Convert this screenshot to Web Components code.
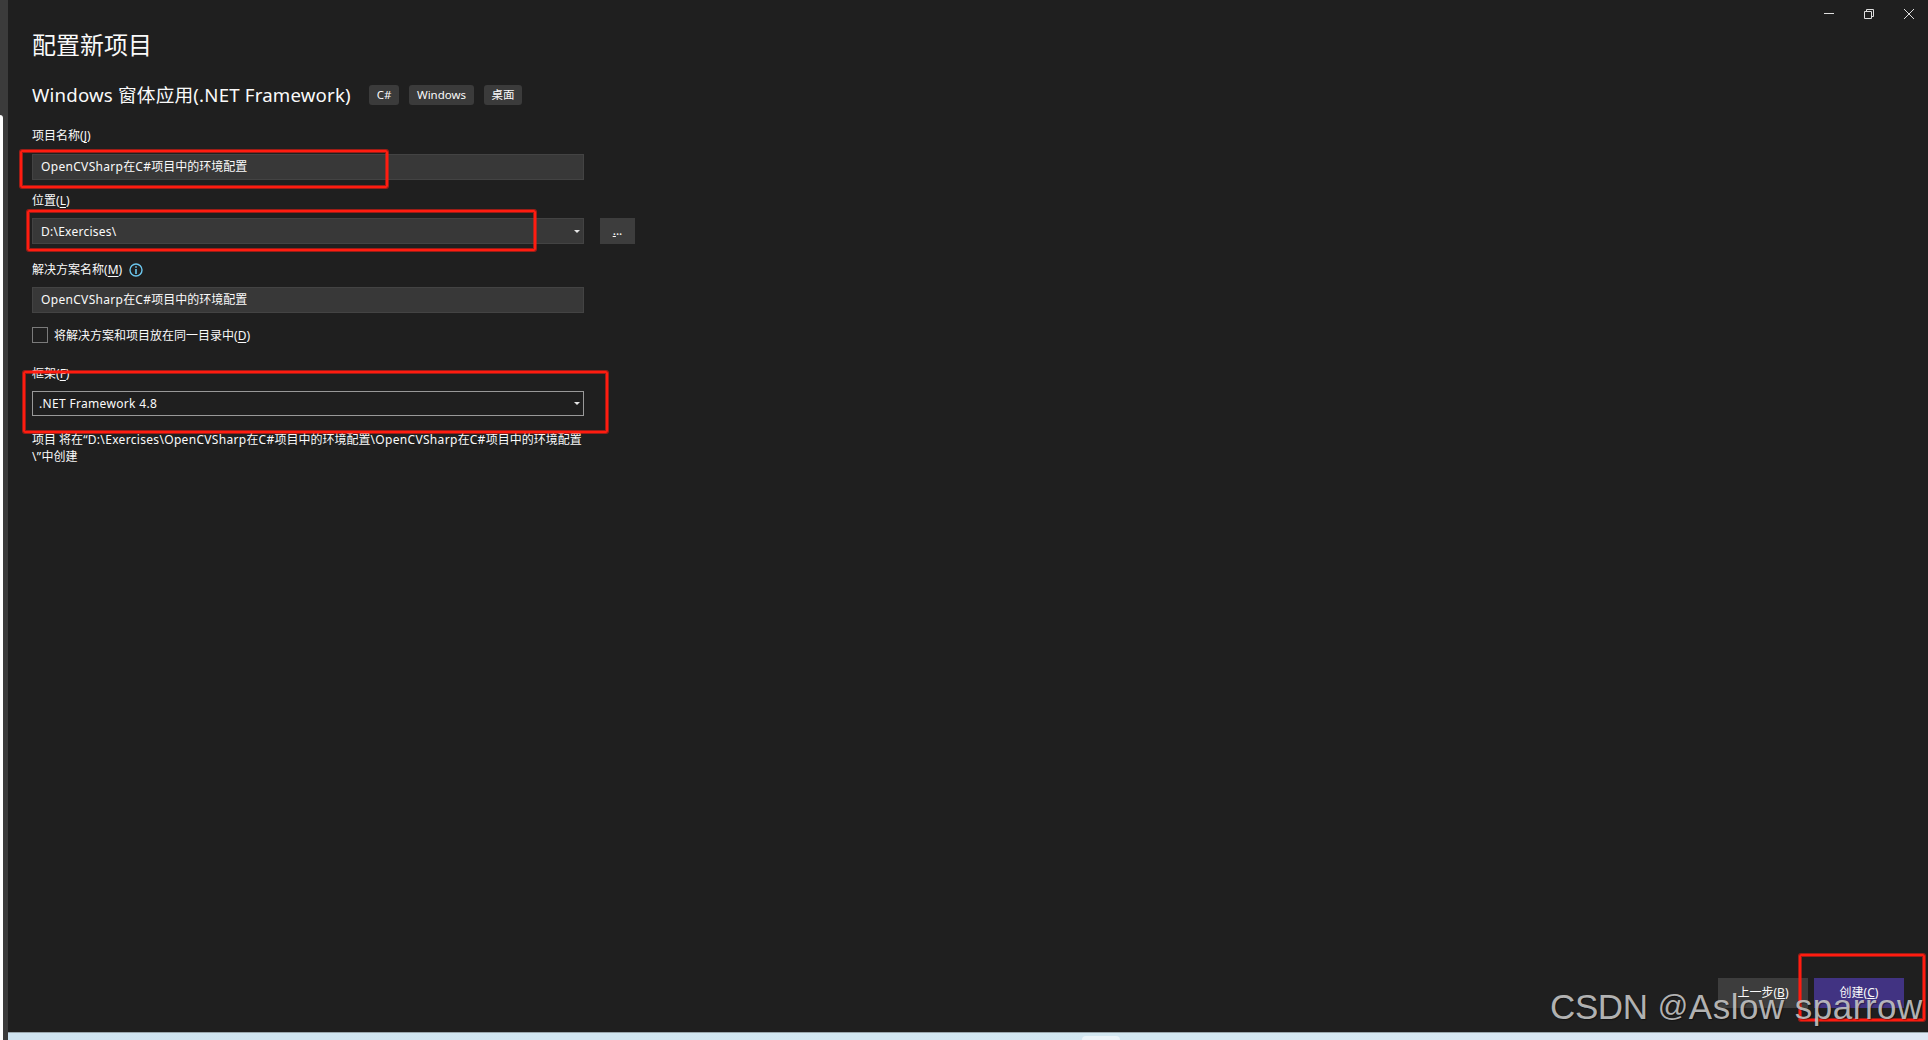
<!DOCTYPE html>
<html lang="zh-CN">
<head>
<meta charset="UTF-8">
<title>配置新项目</title>
<style>
    body {
        margin: 0;
        height: 1040px;
        overflow: hidden;
        background: #1f1f1f;
        color: #fafafa;
        font: 12px/16px "Noto Sans", "Noto Sans CJK SC", sans-serif;
    }
</style>
</head>
<body>
<project-window></project-window>

<script>
class WindowControls extends HTMLElement {
    constructor() {
        super();
        this.attachShadow({ mode: 'open' });
    }

    connectedCallback() {
        this.shadowRoot.innerHTML = `
            <style>
                :host {
                    display: flex;
                    justify-content: flex-end;
                    height: 28px;
                }

                svg {
                    width: 40px;
                    height: 28px;
                    fill: none;
                    stroke: #dedede;
                }
            </style>
            <svg viewBox="0 0 40 28"><path d="M16 13.5h10"/></svg>
            <svg viewBox="0 0 40 28"><path d="M16.5 11.5h7v7h-7zM18.5 11v-1.500h7v7h-2"/></svg>
            <svg viewBox="0 0 40 28"><path d="M16 9l10 10M26 9l-10 10"/></svg>
        `;
    }
}

class TagChip extends HTMLElement {
    constructor() {
        super();
        this.attachShadow({ mode: 'open' });
    }

    connectedCallback() {
        this.shadowRoot.innerHTML = `
            <style>
                :host {
                    display: block;
                    box-sizing: border-box;
                    height: 20px;
                    line-height: 19px;
                    font-size: 11.5px;
                    text-align: center;
                    border-radius: 3px;
                    background: #3b3b3b;
                }
            </style>
            <slot></slot>
        `;
    }
}

class FieldLabel extends HTMLElement {
    constructor() {
        super();
        this.attachShadow({ mode: 'open' });
    }

    connectedCallback() {
        const key = this.getAttribute('key');

        this.shadowRoot.innerHTML = `
            <style>
                :host {
                    display: flex;
                    align-items: center;
                    height: 16px;
                    white-space: nowrap;
                }

                u {
                    text-underline-offset: 2px;
                    text-decoration-thickness: 1px;
                    text-decoration-skip-ink: none;
                }
            </style>
            <span><slot></slot>(<u>${key}</u>)</span>
            <slot name="icon"></slot>
        `;
    }
}

class TextField extends HTMLElement {
    constructor() {
        super();
        this.attachShadow({ mode: 'open' });
    }

    connectedCallback() {
        const arrow = this.hasAttribute('dropdown')
            ? '<svg viewBox="0 0 6 3"><path d="M0 0h6L3 3z"/></svg>'
            : '';

        this.shadowRoot.innerHTML = `
            <style>
                :host {
                    display: flex;
                    align-items: center;
                    justify-content: space-between;
                    box-sizing: border-box;
                    width: 552px;
                    height: 26px;
                    padding: 0 3px 0 8px;
                    border: 1px solid #434343;
                    background: #383838;
                    white-space: nowrap;
                }

                :host([outlined]) {
                    height: 25px;
                    padding-left: 6px;
                    border-color: #999;
                    background: #1f1f1f;
                }

                svg {
                    width: 6px;
                    height: 3px;
                    fill: #e6e6e6;
                }
            </style>
            <span><slot></slot></span>
            ${arrow}
        `;
    }
}

class PushButton extends HTMLElement {
    constructor() {
        super();
        this.attachShadow({ mode: 'open' });
    }

    connectedCallback() {
        this.shadowRoot.innerHTML = `
            <style>
                :host {
                    display: flex;
                    align-items: center;
                    justify-content: center;
                    width: 90px;
                    height: 30px;
                    background: #3d3d3d;
                }

                :host([primary]) {
                    background: #413382;
                }

                :host([small]) {
                    width: 35px;
                    height: 26px;
                }
            </style>
            <span><slot></slot></span>
        `;
    }
}

class MarkBox extends HTMLElement {
    constructor() {
        super();
        this.attachShadow({ mode: 'open' });
    }

    connectedCallback() {
        const [x, y, width, height] = this.getAttribute('rect').split(' ');

        this.shadowRoot.innerHTML = `
            <style>
                :host {
                    position: absolute;
                    left: ${x}px;
                    top: ${y}px;
                    width: ${width}px;
                    height: ${height}px;
                    box-sizing: border-box;
                    border: 2px solid #ff1c10;
                    border-radius: 2px;
                    box-shadow: 0 0 0 1px rgba(255, 28, 16, .55), inset 0 0 0 1px rgba(255, 28, 16, .55);
                }
            </style>
        `;
    }
}

class ProjectForm extends HTMLElement {
    constructor() {
        super();
        this.attachShadow({ mode: 'open' });
    }

    connectedCallback() {
        this.shadowRoot.innerHTML = `
            <style>
                :host {
                    display: block;
                    padding-left: 24px;
                }

                h1, h2, p {
                    margin: 0;
                    font-weight: 400;
                }

                h1 {
                    font-size: 24px;
                    line-height: 34px;
                }

                .template {
                    display: flex;
                    align-items: center;
                    gap: 10px;
                    height: 24px;
                    margin: 21px 0 21px;
                }

                h2 {
                    width: 316px;
                    font-size: 18.67px;
                    letter-spacing: .18px;
                    line-height: 24px;
                    white-space: nowrap;
                }

                .latin {
                    letter-spacing: .32px;
                }

                text-field {
                    margin: 10px 0 13px;
                }

                .location {
                    display: flex;
                    gap: 16px;
                    margin: 9px 0 18px;
                }

                .location text-field {
                    margin: 0;
                    line-height: 18px;
                }

                .location .latin {
                    display: block;
                    padding-top: 1px;
                    letter-spacing: .25px;
                }

                .solution {
                    margin: 9px 0 14px;
                }

                .info {
                    width: 14px;
                    height: 14px;
                    margin-left: 7px;
                }

                .check {
                    display: flex;
                    align-items: center;
                    gap: 6px;
                    margin-bottom: 23px;
                }

                .check field-label {
                    height: 14px;
                    padding-top: 2px;
                }

                .box {
                    box-sizing: border-box;
                    width: 16px;
                    height: 16px;
                    border: 1px solid #7a7a7a;
                }

                .framework {
                    margin: 9px 0 15px;
                }

                p {
                    line-height: 17px;
                    white-space: nowrap;
                }
            </style>
            <h1>配置新项目</h1>
            <div class="template">
                <h2>Windows 窗体应用(.NET Framework)</h2>
                <tag-chip style="width: 30px; margin-left: 11px">C#</tag-chip>
                <tag-chip style="width: 65px">Windows</tag-chip>
                <tag-chip style="width: 38px">桌面</tag-chip>
            </div>
            <field-label key="J">项目名称</field-label>
            <text-field><span class="latin">OpenCVSharp</span>在<span class="latin">C#</span>项目中的环境配置</text-field>
            <field-label key="L">位置</field-label>
            <div class="location">
                <text-field dropdown><span class="latin">D:\\Exercises\\</span></text-field>
                <push-button small><u>.</u>..</push-button>
            </div>
            <field-label key="M">解决方案名称<svg slot="icon" class="info" viewBox="0 0 14 14">
                    <circle cx="7" cy="7" r="6" fill="none" stroke="#6cc7ee" stroke-width="1.400"/>
                    <path d="M6.200 3.200h1.600v1.600H6.200zM6.200 6h1.600v5H6.200z" fill="#6cc7ee"/>
                </svg></field-label>
            <text-field class="solution"><span class="latin">OpenCVSharp</span>在<span class="latin">C#</span>项目中的环境配置</text-field>
            <div class="check">
                <div class="box"></div>
                <field-label key="D">将解决方案和项目放在同一目录中</field-label>
            </div>
            <field-label key="F">框架</field-label>
            <text-field class="framework" outlined dropdown><span class="latin">.NET Framework 4.8</span></text-field>
            <p>项目 将在<span class="latin">“D:\\Exercises\\OpenCVSharp</span>在<span class="latin">C#</span>项目中的环境配置<span class="latin">\\OpenCVSharp</span>在<span class="latin">C#</span>项目中的环境配置<br><span class="latin">\\”</span>中创建</p>
        `;
    }
}

class ProjectWindow extends HTMLElement {
    constructor() {
        super();
        this.attachShadow({ mode: 'open' });
    }

    connectedCallback() {
        this.shadowRoot.innerHTML = `
            <style>
                :host {
                    display: grid;
                    grid-template-columns: 8px 1fr;
                    position: relative;
                    width: 1928px;
                    height: 1040px;
                    overflow: hidden;
                }

                .edge {
                    background: #3b3b3b;
                    padding-top: 115px;
                }

                .edge div {
                    width: 3px;
                    height: 925px;
                    border-top-right-radius: 3px;
                    background: #fff;
                }

                .page {
                    display: flex;
                    flex-direction: column;
                }

                footer {
                    display: flex;
                    justify-content: flex-end;
                    gap: 6px;
                    margin-top: auto;
                    padding: 0 24px 24px 0;
                }

                .taskbar {
                    box-sizing: border-box;
                    height: 8px;
                    border-top: 1px solid #9aa7ad;
                    background: linear-gradient(90deg, #cfe4f0, #d3e8f2 60%, #dde7f4);
                }

                .taskbar div {
                    width: 38px;
                    height: 4px;
                    margin: 3px 0 0 1074px;
                    border-radius: 4px 4px 0 0;
                    background: #ecf5fa;
                }

                .watermark {
                    position: absolute;
                    left: 1550px;
                    top: 983px;
                    font: 35px/48px "Liberation Sans", sans-serif;
                    letter-spacing: .5px;
                    color: rgba(200, 200, 200, .88);
                    text-shadow: 1px 1px 1px rgba(0, 0, 0, .4);
                    white-space: nowrap;
                }

                .org {
                    letter-spacing: -.4px;
                }

                .at {
                    font-size: 30px;
                    line-height: 0;
                    vertical-align: 3px;
                }
            </style>
            <div class="edge"><div></div></div>
            <div class="page">
                <window-controls></window-controls>
                <project-form></project-form>
                <footer>
                    <push-button>上一步(<u>B</u>)</push-button>
                    <push-button primary>创建(<u>C</u>)</push-button>
                </footer>
                <div class="taskbar"><div></div></div>
            </div>
            <mark-box rect="20 150 368 38"></mark-box>
            <mark-box rect="27 210 509 41"></mark-box>
            <mark-box rect="23 371 585 62"></mark-box>
            <mark-box rect="1799 954 126 67"></mark-box>
            <div class="watermark"><span class="org">CSDN</span> <span class="at">@</span>Aslow sparrow</div>
        `;
    }
}

customElements.define('window-controls', WindowControls);
customElements.define('tag-chip', TagChip);
customElements.define('field-label', FieldLabel);
customElements.define('text-field', TextField);
customElements.define('push-button', PushButton);
customElements.define('mark-box', MarkBox);
customElements.define('project-form', ProjectForm);
customElements.define('project-window', ProjectWindow);
</script>
</body>
</html>
